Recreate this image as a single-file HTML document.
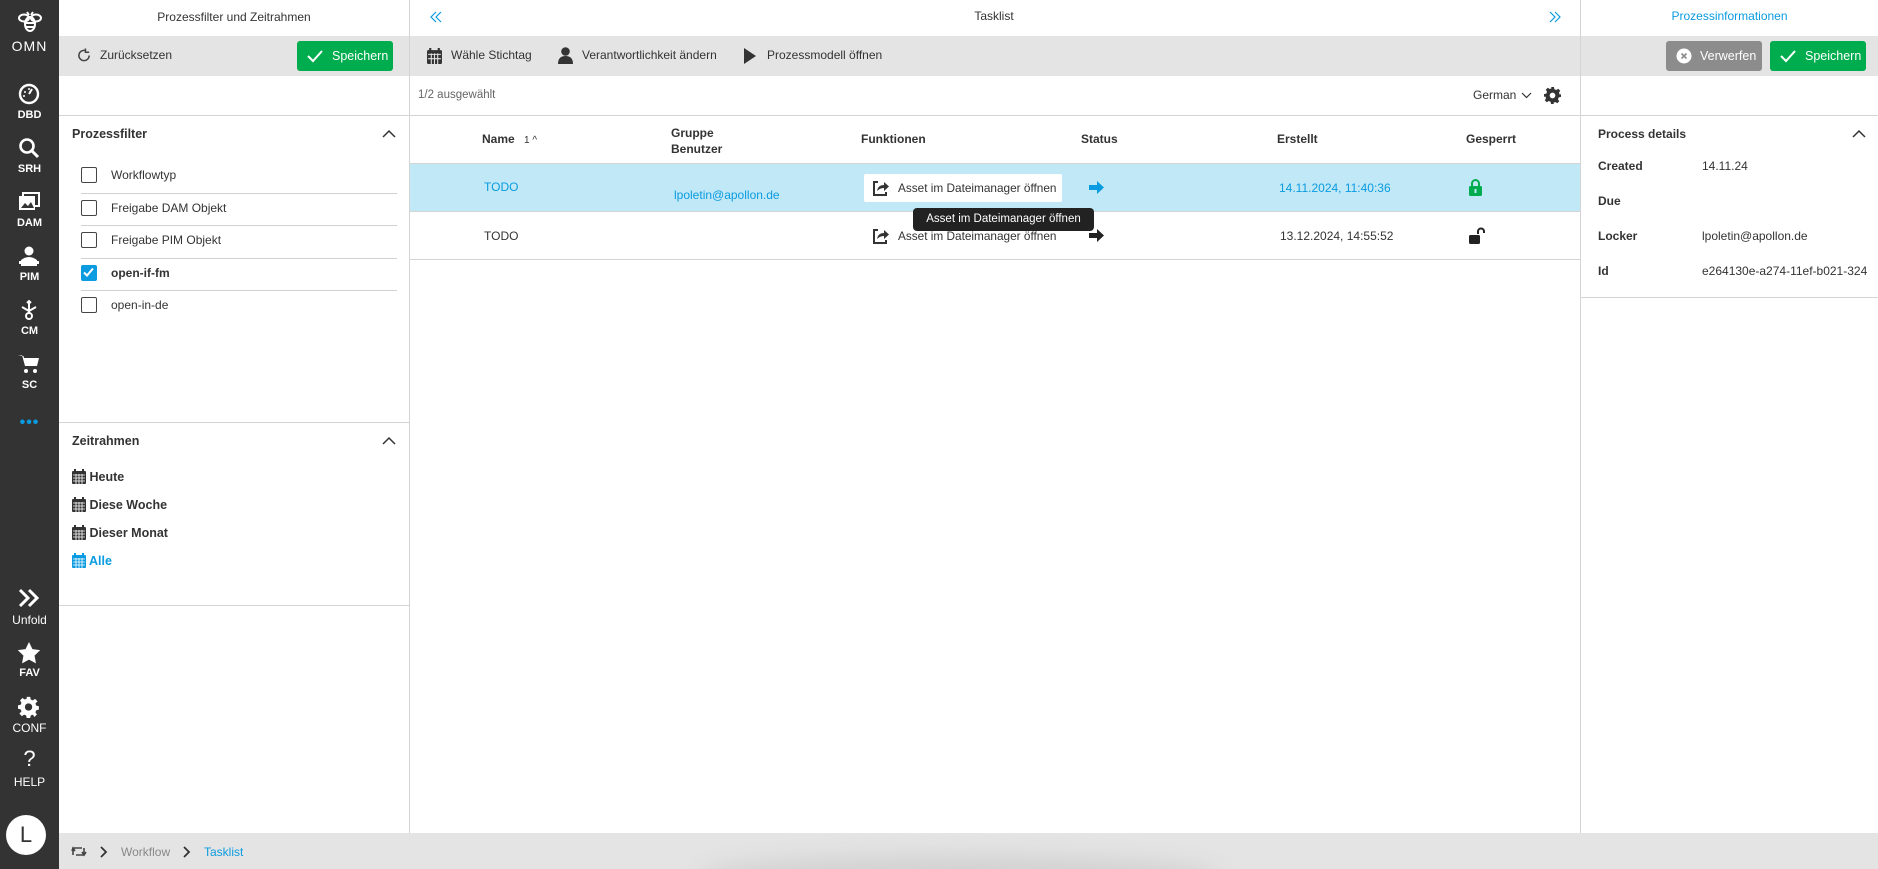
<!DOCTYPE html>
<html><head><meta charset="utf-8"><style>
*{box-sizing:border-box;margin:0;padding:0}
body{width:1878px;height:869px;overflow:hidden;background:#fff;font-family:"Liberation Sans",Arial,sans-serif;font-size:12.5px;color:#333;position:relative}
.a{position:absolute}
.sb{left:0;top:0;width:59px;height:869px;background:#333}
.si{position:absolute;left:0;width:59px;text-align:center;color:#fff;font-size:11px;font-weight:bold}
.gray{background:#e4e4e4}
.btn{position:absolute;height:30px;border-radius:3px;color:#fff;font-size:13px;display:flex;align-items:center;padding-left:10px}
.green{background:#00ad4e}
.cb{position:absolute;left:81px;width:16px;height:16px;border:1.5px solid #444;border-radius:2px;background:#fff}
.lt{position:absolute;left:111px;font-size:12.5px}
.sep{position:absolute;left:81px;width:316px;height:1px;background:#d0d0d0}
.hl{height:1px;background:#d4d4d4}
.vl{width:1px;background:#d4d4d4}
b{font-weight:bold}
.blue{color:#0a9be0}
</style></head><body>
<div class="a sb"></div>
<svg class="a" style="left:16px;top:8px" width="28" height="28" viewBox="0 0 28 28" fill="none" stroke="#fff" stroke-width="2"><ellipse cx="8" cy="10" rx="5" ry="3.5"/><ellipse cx="20" cy="10" rx="5" ry="3.5"/><ellipse cx="14" cy="16" rx="5" ry="7"/><path d="M9 15h10M10 19h8M11 4l2 3M17 4l-2 3"/></svg>
<div class="si" style="top:38px;font-size:14px;font-weight:normal;letter-spacing:1px">OMN</div>
<svg class="a" style="left:18px;top:83px" width="22" height="22" viewBox="0 0 22 22"><circle cx="11" cy="11" r="9" fill="none" stroke="#fff" stroke-width="2.4"/><path d="M11 11l3-5" stroke="#fff" stroke-width="2"/><circle cx="7" cy="9" r="1" fill="#fff"/><circle cx="11" cy="6" r="1" fill="#fff"/><circle cx="6" cy="13" r="1" fill="#fff"/></svg>
<div class="si" style="top:109px">DBD</div>
<svg class="a" style="left:18px;top:137px" width="22" height="22" viewBox="0 0 22 22"><circle cx="9" cy="9" r="6.5" fill="none" stroke="#fff" stroke-width="2.6"/><path d="M14 14l6 6" stroke="#fff" stroke-width="3"/></svg>
<div class="si" style="top:163px">SRH</div>
<svg class="a" style="left:18px;top:192px" width="22" height="20" viewBox="0 0 22 20"><rect x="1" y="4" width="16" height="14" fill="#fff"/><rect x="5" y="1" width="16" height="13" fill="none" stroke="#fff" stroke-width="2"/><path d="M3 16l4-5 3 3 3-4 3 6z" fill="#333"/></svg>
<div class="si" style="top:217px">DAM</div>
<svg class="a" style="left:18px;top:246px" width="22" height="22" viewBox="0 0 22 22" fill="#fff"><circle cx="11" cy="5" r="4.5"/><path d="M3 14q8-6 16 0v6H3z"/><rect x="1" y="15" width="20" height="3"/></svg>
<div class="si" style="top:271px">PIM</div>
<svg class="a" style="left:19px;top:300px" width="20" height="20" viewBox="0 0 20 20" fill="none" stroke="#fff" stroke-width="2"><path d="M10 1v12M3 7l7 4 7-4"/><circle cx="10" cy="16" r="3"/><path d="M8 3l2-2 2 2"/></svg>
<div class="si" style="top:325px">CM</div>
<svg class="a" style="left:18px;top:353px" width="22" height="22" viewBox="0 0 22 22" fill="#fff"><path d="M0 2h4l3 11h12l2-8H6l-.5-2z"/><circle cx="8" cy="18" r="2"/><circle cx="17" cy="18" r="2"/></svg>
<div class="si" style="top:379px">SC</div>
<div class="si" style="top:414px;color:#0a9be0;font-size:16px;letter-spacing:1px">•••</div>
<svg class="a" style="left:17px;top:588px" width="24" height="20" viewBox="0 0 24 20" fill="none" stroke="#fff" stroke-width="3"><path d="M3 2l8 8-8 8M12 2l8 8-8 8"/></svg>
<div class="si" style="top:613px;font-weight:normal;font-size:12px">Unfold</div>
<svg class="a" style="left:17px;top:642px" width="24" height="22" viewBox="0 0 24 23" fill="#fff"><path d="M12 0l3.6 7.4 8.1 1.1-5.9 5.7 1.5 8.1L12 18.4 4.7 22.3l1.5-8.1L.3 8.5l8.1-1.1z"/></svg>
<div class="si" style="top:667px">FAV</div>
<svg class="a" style="left:18px;top:696px" width="22" height="22" viewBox="0 0 24 24" fill="#fff"><path d="M10 1h4l.6 3 2.4 1 2.6-1.7 2.8 2.8L20 8.7l1 2.4 3 .6v4l-3 .6-1 2.4 1.7 2.6-2.8 2.8L17 21.4l-2.4 1-.6 3h-4l-.6-3-2.4-1-2.6 1.7-2.8-2.8L4 17.7 3 15.3 0 14.7v-4l3-.6 1-2.4L2.3 5.1l2.8-2.8L7.7 4 10 3z" transform="scale(.95)"/><circle cx="11.5" cy="12" r="4" fill="#333"/></svg>
<div class="si" style="top:721px;font-weight:normal;font-size:12px">CONF</div>
<div class="si" style="top:746px;font-size:22px;font-weight:normal">?</div>
<div class="si" style="top:775px;font-weight:normal;font-size:12px">HELP</div>
<div class="a" style="left:6px;top:815px;width:40px;height:40px;border-radius:50%;background:#fff;color:#333;font-size:22px;text-align:center;line-height:40px">L</div>

<div class="a" style="left:59px;top:0;width:350px;height:34px;line-height:34px;text-align:center;font-size:12px">Prozessfilter und Zeitrahmen</div>
<div class="a gray" style="left:59px;top:36px;width:351px;height:40px"></div>
<svg class="a" style="left:77px;top:48px" width="15" height="15" viewBox="0 0 16 16" fill="none" stroke="#444" stroke-width="1.6"><path d="M13 8A5.5 5.5 0 1 1 9 2.7"/><path d="M9 .5v4h4" /></svg>
<div class="a" style="left:100px;top:48px;font-size:12px">Zurücksetzen</div>
<div class="btn green" style="left:297px;top:41px;width:96px;font-size:12.5px"><svg width="16" height="14" viewBox="0 0 16 14"><path d="M1 7l5 5 9-10" fill="none" stroke="#fff" stroke-width="2"/></svg><span style="margin-left:9px">Speichern</span></div>
<div class="a hl" style="left:59px;top:115px;width:1819px"></div>
<div class="a" style="left:72px;top:127px;font-weight:bold;font-size:12.5px">Prozessfilter</div>
<svg class="a" style="left:382px;top:129px" width="14" height="9" viewBox="0 0 14 9"><path d="M1 8l6-6 6 6" fill="none" stroke="#333" stroke-width="1.5"/></svg>
<div class="cb" style="top:167px"></div><div class="lt" style="top:168px;font-size:12px">Workflowtyp</div>
<div class="sep" style="top:193px"></div>
<div class="cb" style="top:200px"></div><div class="lt" style="top:201px;font-size:12px">Freigabe DAM Objekt</div>
<div class="sep" style="top:225px"></div>
<div class="cb" style="top:232px"></div><div class="lt" style="top:233px;font-size:12px">Freigabe PIM Objekt</div>
<div class="sep" style="top:258px"></div>
<div class="cb" style="top:265px;background:#0a9be0;border-color:#0a9be0"><svg width="13" height="13" viewBox="0 0 13 13" style="position:absolute;left:0;top:0"><path d="M2 6.5l3 3 6-7" fill="none" stroke="#fff" stroke-width="2"/></svg></div><div class="lt" style="top:266px;font-weight:bold;font-size:12px">open-if-fm</div>
<div class="sep" style="top:290px"></div>
<div class="cb" style="top:297px"></div><div class="lt" style="top:298px;font-size:12px">open-in-de</div>
<div class="a hl" style="left:59px;top:422px;width:351px"></div>
<div class="a" style="left:72px;top:434px;font-weight:bold">Zeitrahmen</div>
<svg class="a" style="left:382px;top:436px" width="14" height="9" viewBox="0 0 14 9"><path d="M1 8l6-6 6 6" fill="none" stroke="#333" stroke-width="1.5"/></svg>
<div class="a" style="left:72px;top:469px;font-weight:bold;line-height:16px">
<div style="height:28px"><svg width="14" height="15" viewBox="0 0 14 15" style="vertical-align:-3px"><rect x="0" y="2" width="14" height="13" rx="1" fill="#333"/><path d="M3 0v3M11 0v3" stroke="#333" stroke-width="2"/><path d="M1 6h12M1 9h12M1 12h12M4 5v10M7 5v10M10 5v10" stroke="#fff" stroke-width=".8"/></svg> Heute</div>
<div style="height:28px"><svg width="14" height="15" viewBox="0 0 14 15" style="vertical-align:-3px"><rect x="0" y="2" width="14" height="13" rx="1" fill="#333"/><path d="M3 0v3M11 0v3" stroke="#333" stroke-width="2"/><path d="M1 6h12M1 9h12M1 12h12M4 5v10M7 5v10M10 5v10" stroke="#fff" stroke-width=".8"/></svg> Diese Woche</div>
<div style="height:28px"><svg width="14" height="15" viewBox="0 0 14 15" style="vertical-align:-3px"><rect x="0" y="2" width="14" height="13" rx="1" fill="#333"/><path d="M3 0v3M11 0v3" stroke="#333" stroke-width="2"/><path d="M1 6h12M1 9h12M1 12h12M4 5v10M7 5v10M10 5v10" stroke="#fff" stroke-width=".8"/></svg> Dieser Monat</div>
<div style="height:28px;color:#0a9be0"><svg width="14" height="15" viewBox="0 0 14 15" style="vertical-align:-3px"><rect x="0" y="2" width="14" height="13" rx="1" fill="#0a9be0"/><path d="M3 0v3M11 0v3" stroke="#0a9be0" stroke-width="2"/><path d="M1 6h12M1 9h12M1 12h12M4 5v10M7 5v10M10 5v10" stroke="#fff" stroke-width=".8"/></svg> Alle</div>
</div>
<div class="a hl" style="left:59px;top:605px;width:351px"></div>
<div class="a vl" style="left:409px;top:0;height:833px"></div>

<svg class="a" style="left:429px;top:10px" width="14" height="14" viewBox="0 0 14 14" fill="none" stroke="#0a9be0" stroke-width="1.2"><path d="M7 2L2 7l5 5M12 2L7 7l5 5"/></svg>
<div class="a" style="left:940px;top:0;width:108px;line-height:32px;text-align:center;font-size:12px">Tasklist</div>
<svg class="a" style="left:1548px;top:10px" width="14" height="14" viewBox="0 0 14 14" fill="none" stroke="#0a9be0" stroke-width="1.2"><path d="M2 2l5 5-5 5M7 2l5 5-5 5"/></svg>
<div class="a gray" style="left:410px;top:36px;width:1171px;height:40px"></div>
<svg class="a" style="left:427px;top:48px" width="15" height="16" viewBox="0 0 14 15"><rect x="0" y="2" width="14" height="13" rx="1" fill="#333"/><path d="M3 0v3M11 0v3" stroke="#333" stroke-width="2"/><path d="M1 6h12M1 10h12M4 5v10M7 5v10M10 5v10" stroke="#e4e4e4" stroke-width="1"/></svg>
<div class="a" style="left:451px;top:48px;font-size:12px">Wähle Stichtag</div>
<svg class="a" style="left:558px;top:47px" width="15" height="17" viewBox="0 0 15 17" fill="#333"><circle cx="7.5" cy="4.5" r="4.3"/><path d="M0 17q0-8 7.5-8T15 17z"/></svg>
<div class="a" style="left:582px;top:48px;font-size:12px">Verantwortlichkeit ändern</div>
<svg class="a" style="left:744px;top:48px" width="12" height="16" viewBox="0 0 12 16"><path d="M0 0l12 8-12 8z" fill="#333"/></svg>
<div class="a" style="left:767px;top:48px;font-size:12px">Prozessmodell öffnen</div>
<div class="a" style="left:418px;top:89px;font-size:11.5px;color:#666">1/2 ausgewählt</div>
<div class="a" style="left:1473px;top:88px;font-size:12px">German</div>
<svg class="a" style="left:1521px;top:92px" width="11" height="7" viewBox="0 0 11 7"><path d="M1 1l4.5 4.5L10 1" fill="none" stroke="#333" stroke-width="1.2"/></svg>
<svg class="a" style="left:1544px;top:87px" width="17" height="17" viewBox="0 0 24 24" fill="#333"><path d="M10 0h4l.7 3.2 2.6 1.1 2.8-1.8 2.8 2.8-1.8 2.8 1.1 2.6L24 10v4l-3.2.7-1.1 2.6 1.8 2.8-2.8 2.8-2.8-1.8-2.6 1.1L14 24h-4l-.7-3.2-2.6-1.1-2.8 1.8-2.8-2.8 1.8-2.8-1.1-2.6L0 14v-4l3.2-.7 1.1-2.6-1.8-2.8 2.8-2.8 2.8 1.8 2.6-1.1z"/><circle cx="12" cy="12" r="4" fill="#fff"/></svg>

<div class="a" style="left:482px;top:132px;font-weight:bold;font-size:12px">Name <span style="font-weight:normal;font-size:10px;margin-left:6px">1 ^</span></div>
<div class="a" style="left:671px;top:125px;font-weight:bold;font-size:12px;line-height:16px">Gruppe<br>Benutzer</div>
<div class="a" style="left:861px;top:132px;font-weight:bold;font-size:12px">Funktionen</div>
<div class="a" style="left:1081px;top:132px;font-weight:bold;font-size:12px">Status</div>
<div class="a" style="left:1277px;top:132px;font-weight:bold;font-size:12px">Erstellt</div>
<div class="a" style="left:1466px;top:132px;font-weight:bold;font-size:12px">Gesperrt</div>
<div class="a hl" style="left:410px;top:163px;width:1170px"></div>
<div class="a" style="left:410px;top:164px;width:1170px;height:47px;background:#c1e8f6"></div>
<div class="a hl" style="left:410px;top:211px;width:1170px"></div>
<div class="a hl" style="left:410px;top:259px;width:1170px"></div>
<div class="a blue" style="left:484px;top:180px;font-size:12px">TODO</div>
<div class="a blue" style="left:674px;top:188px;font-size:12px">lpoletin@apollon.de</div>
<div class="a" style="left:864px;top:174px;width:198px;height:28px;background:#fff;border-radius:2px"></div>
<svg class="a" style="left:872px;top:179px" width="17" height="17" viewBox="0 0 17 17"><path d="M6 3H2v13h12v-3" fill="none" stroke="#333" stroke-width="2"/><path d="M5 12q1-6 7-6V3l5 4.5-5 4.5V9q-4 0-7 3z" fill="#333"/></svg>
<div class="a" style="left:898px;top:181px;font-size:11.8px">Asset im Dateimanager öffnen</div>
<svg class="a" style="left:1089px;top:181px" width="15" height="13" viewBox="0 0 15 13"><path d="M0 4h8V0l7 6.5L8 13V9H0z" fill="#0a9be0"/></svg>
<div class="a blue" style="left:1279px;top:181px;font-size:12px">14.11.2024, 11:40:36</div>
<svg class="a" style="left:1469px;top:179px" width="13" height="17" viewBox="0 0 13 17"><path d="M3 7V4.5a3.5 3.5 0 0 1 7 0V7" fill="none" stroke="#00ad4e" stroke-width="2"/><rect x="0" y="7" width="13" height="10" rx="1.5" fill="#00ad4e"/><rect x="5.5" y="10" width="2" height="4" fill="#c1e8f6"/></svg>
<div class="a" style="left:484px;top:229px;font-size:12px">TODO</div>
<svg class="a" style="left:872px;top:227px" width="17" height="17" viewBox="0 0 17 17"><path d="M6 3H2v13h12v-3" fill="none" stroke="#333" stroke-width="2"/><path d="M5 12q1-6 7-6V3l5 4.5-5 4.5V9q-4 0-7 3z" fill="#333"/></svg>
<div class="a" style="left:898px;top:229px;font-size:11.8px">Asset im Dateimanager öffnen</div>
<svg class="a" style="left:1089px;top:229px" width="15" height="13" viewBox="0 0 15 13"><path d="M0 4h8V0l7 6.5L8 13V9H0z" fill="#222"/></svg>
<div class="a" style="left:1280px;top:229px;font-size:12px">13.12.2024, 14:55:52</div>
<svg class="a" style="left:1469px;top:227px" width="16" height="17" viewBox="0 0 16 17"><path d="M9 7V4.5a3 3 0 0 1 6 0V6" fill="none" stroke="#222" stroke-width="2"/><rect x="0" y="8" width="11" height="9" rx="1.5" fill="#222"/></svg>
<div class="a" style="left:913px;top:208px;width:181px;height:23px;background:#222;color:#fff;border-radius:4px;font-size:11.5px;line-height:23px;text-align:center">Asset im Dateimanager öffnen</div>
<div class="a vl" style="left:1580px;top:0;height:833px"></div>

<div class="a blue" style="left:1581px;top:0;width:297px;line-height:32px;text-align:center;font-size:12px">Prozessinformationen</div>
<div class="a gray" style="left:1581px;top:36px;width:297px;height:40px"></div>
<div class="btn" style="left:1666px;top:41px;width:96px;background:#8c8c8c;font-size:12.5px"><svg width="16" height="16" viewBox="0 0 16 16"><circle cx="8" cy="8" r="7.5" fill="#fff"/><path d="M5.5 5.5l5 5M10.5 5.5l-5 5" stroke="#8c8c8c" stroke-width="1.6"/></svg><span style="margin-left:8px">Verwerfen</span></div>
<div class="btn green" style="left:1770px;top:41px;width:96px;font-size:12.5px"><svg width="16" height="14" viewBox="0 0 16 14"><path d="M1 7l5 5 9-10" fill="none" stroke="#fff" stroke-width="2"/></svg><span style="margin-left:9px">Speichern</span></div>
<div class="a" style="left:1598px;top:127px;font-weight:bold;font-size:12px">Process details</div>
<svg class="a" style="left:1852px;top:129px" width="14" height="9" viewBox="0 0 14 9"><path d="M1 8l6-6 6 6" fill="none" stroke="#333" stroke-width="1.5"/></svg>
<div class="a" style="left:1598px;top:149px;font-weight:bold;font-size:12px;line-height:35px">Created<br>Due<br>Locker<br>Id</div>
<div class="a" style="left:1702px;top:149px;font-size:12px;line-height:35px;white-space:nowrap;width:176px;overflow:hidden">14.11.24<br>&nbsp;<br>lpoletin@apollon.de<br>e264130e-a274-11ef-b021-324</div>
<div class="a hl" style="left:1581px;top:297px;width:297px"></div>

<div class="a gray" style="left:59px;top:833px;width:1819px;height:36px;overflow:hidden"><div style="position:absolute;left:640px;top:22px;width:520px;height:40px;border-radius:50%;background:#d2d2d2;filter:blur(10px)"></div></div>
<svg class="a" style="left:71px;top:845px" width="16" height="13" viewBox="0 0 16 13" fill="none" stroke="#444" stroke-width="1.6"><path d="M2 3h9M2 3v7M13 10H5M13 10V3"/><path d="M1 6l1-3 2 3M15 7l-2 3-2-3"/></svg>
<svg class="a" style="left:100px;top:846px" width="8" height="12" viewBox="0 0 8 12"><path d="M1 1l5 5-5 5" fill="none" stroke="#333" stroke-width="1.8"/></svg>
<div class="a" style="left:121px;top:845px;color:#888;font-size:12px">Workflow</div>
<svg class="a" style="left:183px;top:846px" width="8" height="12" viewBox="0 0 8 12"><path d="M1 1l5 5-5 5" fill="none" stroke="#333" stroke-width="1.8"/></svg>
<div class="a blue" style="left:204px;top:845px;font-size:12px">Tasklist</div>
</body></html>
